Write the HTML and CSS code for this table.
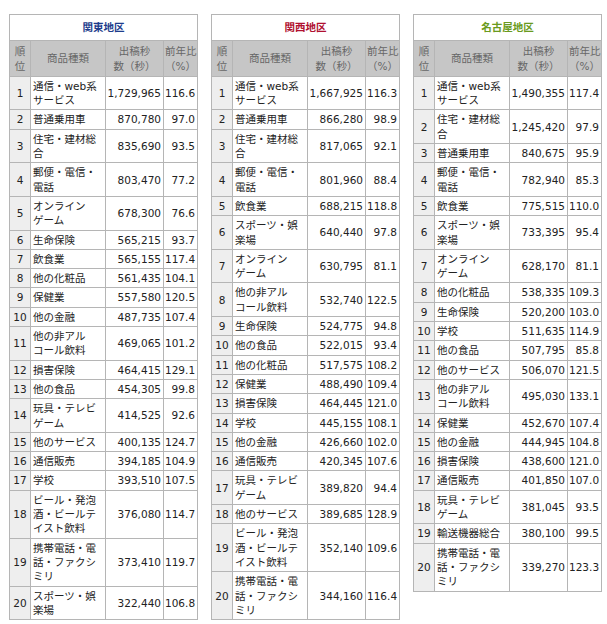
FILE: index.html
```html
<!DOCTYPE html>
<html lang="ja">
<head>
<meta charset="utf-8">
<link rel="stylesheet" href="styles.css">
</head>
<body>
<div class="wrap">
<table class="rank">
<colgroup><col class="c-no"><col class="c-name"><col class="c-num"><col class="c-pct"></colgroup>
<tr><th colspan="4" class="title kanto">関東地区</th></tr>
<tr class="head"><th>順<br>位</th><th>商品種類</th><th>出稿秒<br>数（秒）</th><th>前年比<br>（%）</th></tr>
<tr><td class="no">1</td><td>通信・web系<br>サービス</td><td class="num">1,729,965</td><td class="num">116.6</td></tr>
<tr><td class="no">2</td><td>普通乗用車</td><td class="num">870,780</td><td class="num">97.0</td></tr>
<tr><td class="no">3</td><td>住宅・建材総<br>合</td><td class="num">835,690</td><td class="num">93.5</td></tr>
<tr><td class="no">4</td><td>郵便・電信・<br>電話</td><td class="num">803,470</td><td class="num">77.2</td></tr>
<tr><td class="no">5</td><td>オンライン<br>ゲーム</td><td class="num">678,300</td><td class="num">76.6</td></tr>
<tr><td class="no">6</td><td>生命保険</td><td class="num">565,215</td><td class="num">93.7</td></tr>
<tr><td class="no">7</td><td>飲食業</td><td class="num">565,155</td><td class="num">117.4</td></tr>
<tr><td class="no">8</td><td>他の化粧品</td><td class="num">561,435</td><td class="num">104.1</td></tr>
<tr><td class="no">9</td><td>保健業</td><td class="num">557,580</td><td class="num">120.5</td></tr>
<tr><td class="no">10</td><td>他の金融</td><td class="num">487,735</td><td class="num">107.4</td></tr>
<tr><td class="no">11</td><td>他の非アル<br>コール飲料</td><td class="num">469,065</td><td class="num">101.2</td></tr>
<tr><td class="no">12</td><td>損害保険</td><td class="num">464,415</td><td class="num">129.1</td></tr>
<tr><td class="no">13</td><td>他の食品</td><td class="num">454,305</td><td class="num">99.8</td></tr>
<tr><td class="no">14</td><td>玩具・テレビ<br>ゲーム</td><td class="num">414,525</td><td class="num">92.6</td></tr>
<tr><td class="no">15</td><td>他のサービス</td><td class="num">400,135</td><td class="num">124.7</td></tr>
<tr><td class="no">16</td><td>通信販売</td><td class="num">394,185</td><td class="num">104.9</td></tr>
<tr><td class="no">17</td><td>学校</td><td class="num">393,510</td><td class="num">107.5</td></tr>
<tr><td class="no">18</td><td>ビール・発泡<br>酒・ビールテ<br>イスト飲料</td><td class="num">376,080</td><td class="num">114.7</td></tr>
<tr><td class="no">19</td><td>携帯電話・電<br>話・ファクシ<br>ミリ</td><td class="num">373,410</td><td class="num">119.7</td></tr>
<tr><td class="no">20</td><td>スポーツ・娯<br>楽場</td><td class="num">322,440</td><td class="num">106.8</td></tr>
</table>

<table class="rank">
<colgroup><col class="c-no"><col class="c-name"><col class="c-num"><col class="c-pct"></colgroup>
<tr><th colspan="4" class="title kansai">関西地区</th></tr>
<tr class="head"><th>順<br>位</th><th>商品種類</th><th>出稿秒<br>数（秒）</th><th>前年比<br>（%）</th></tr>
<tr><td class="no">1</td><td>通信・web系<br>サービス</td><td class="num">1,667,925</td><td class="num">116.3</td></tr>
<tr><td class="no">2</td><td>普通乗用車</td><td class="num">866,280</td><td class="num">98.9</td></tr>
<tr><td class="no">3</td><td>住宅・建材総<br>合</td><td class="num">817,065</td><td class="num">92.1</td></tr>
<tr><td class="no">4</td><td>郵便・電信・<br>電話</td><td class="num">801,960</td><td class="num">88.4</td></tr>
<tr><td class="no">5</td><td>飲食業</td><td class="num">688,215</td><td class="num">118.8</td></tr>
<tr><td class="no">6</td><td>スポーツ・娯<br>楽場</td><td class="num">640,440</td><td class="num">97.8</td></tr>
<tr><td class="no">7</td><td>オンライン<br>ゲーム</td><td class="num">630,795</td><td class="num">81.1</td></tr>
<tr><td class="no">8</td><td>他の非アル<br>コール飲料</td><td class="num">532,740</td><td class="num">122.5</td></tr>
<tr><td class="no">9</td><td>生命保険</td><td class="num">524,775</td><td class="num">94.8</td></tr>
<tr><td class="no">10</td><td>他の食品</td><td class="num">522,015</td><td class="num">93.4</td></tr>
<tr><td class="no">11</td><td>他の化粧品</td><td class="num">517,575</td><td class="num">108.2</td></tr>
<tr><td class="no">12</td><td>保健業</td><td class="num">488,490</td><td class="num">109.4</td></tr>
<tr><td class="no">13</td><td>損害保険</td><td class="num">464,445</td><td class="num">121.0</td></tr>
<tr><td class="no">14</td><td>学校</td><td class="num">445,155</td><td class="num">108.1</td></tr>
<tr><td class="no">15</td><td>他の金融</td><td class="num">426,660</td><td class="num">102.0</td></tr>
<tr><td class="no">16</td><td>通信販売</td><td class="num">420,345</td><td class="num">107.6</td></tr>
<tr><td class="no">17</td><td>玩具・テレビ<br>ゲーム</td><td class="num">389,820</td><td class="num">94.4</td></tr>
<tr><td class="no">18</td><td>他のサービス</td><td class="num">389,685</td><td class="num">128.9</td></tr>
<tr><td class="no">19</td><td>ビール・発泡<br>酒・ビールテ<br>イスト飲料</td><td class="num">352,140</td><td class="num">109.6</td></tr>
<tr><td class="no">20</td><td>携帯電話・電<br>話・ファクシ<br>ミリ</td><td class="num">344,160</td><td class="num">116.4</td></tr>
</table>

<table class="rank">
<colgroup><col class="c-no"><col class="c-name"><col class="c-num"><col class="c-pct"></colgroup>
<tr><th colspan="4" class="title nagoya">名古屋地区</th></tr>
<tr class="head"><th>順<br>位</th><th>商品種類</th><th>出稿秒<br>数（秒）</th><th>前年比<br>（%）</th></tr>
<tr><td class="no">1</td><td>通信・web系<br>サービス</td><td class="num">1,490,355</td><td class="num">117.4</td></tr>
<tr><td class="no">2</td><td>住宅・建材総<br>合</td><td class="num">1,245,420</td><td class="num">97.9</td></tr>
<tr><td class="no">3</td><td>普通乗用車</td><td class="num">840,675</td><td class="num">95.9</td></tr>
<tr><td class="no">4</td><td>郵便・電信・<br>電話</td><td class="num">782,940</td><td class="num">85.3</td></tr>
<tr><td class="no">5</td><td>飲食業</td><td class="num">775,515</td><td class="num">110.0</td></tr>
<tr><td class="no">6</td><td>スポーツ・娯<br>楽場</td><td class="num">733,395</td><td class="num">95.4</td></tr>
<tr><td class="no">7</td><td>オンライン<br>ゲーム</td><td class="num">628,170</td><td class="num">81.1</td></tr>
<tr><td class="no">8</td><td>他の化粧品</td><td class="num">538,335</td><td class="num">109.3</td></tr>
<tr><td class="no">9</td><td>生命保険</td><td class="num">520,200</td><td class="num">103.0</td></tr>
<tr><td class="no">10</td><td>学校</td><td class="num">511,635</td><td class="num">114.9</td></tr>
<tr><td class="no">11</td><td>他の食品</td><td class="num">507,795</td><td class="num">85.8</td></tr>
<tr><td class="no">12</td><td>他のサービス</td><td class="num">506,070</td><td class="num">121.5</td></tr>
<tr><td class="no">13</td><td>他の非アル<br>コール飲料</td><td class="num">495,030</td><td class="num">133.1</td></tr>
<tr><td class="no">14</td><td>保健業</td><td class="num">452,670</td><td class="num">107.4</td></tr>
<tr><td class="no">15</td><td>他の金融</td><td class="num">444,945</td><td class="num">104.8</td></tr>
<tr><td class="no">16</td><td>損害保険</td><td class="num">438,600</td><td class="num">121.0</td></tr>
<tr><td class="no">17</td><td>通信販売</td><td class="num">401,850</td><td class="num">107.0</td></tr>
<tr><td class="no">18</td><td>玩具・テレビ<br>ゲーム</td><td class="num">381,045</td><td class="num">93.5</td></tr>
<tr><td class="no">19</td><td>輸送機器総合</td><td class="num">380,100</td><td class="num">99.5</td></tr>
<tr><td class="no">20</td><td>携帯電話・電<br>話・ファクシ<br>ミリ</td><td class="num">339,270</td><td class="num">123.3</td></tr>
</table>
</div>
</body>
</html>
```
FILE: styles.css
```css
html, body {
  margin: 0;
  padding: 0;
  background: #ffffff;
}
body {
  font-family: "DejaVu Sans", "Noto Sans CJK JP", sans-serif;
  font-size: 10.5px;
  line-height: 14.3px;
  color: #222222;
}
.wrap {
  display: flex;
  align-items: flex-start;
  gap: 13px;
  padding: 14px 0 0 9px;
}
.rank {
  border-collapse: collapse;
  table-layout: fixed;
  width: 188px;
  flex: none;
}
.c-no { width: 21px; }
.c-name { width: 75px; }
.c-num { width: 58px; }
.c-pct { width: 34px; }
.rank th,
.rank td {
  border: 1px solid #b5b5b5;
  padding: 2px 2px;
  vertical-align: middle;
  white-space: nowrap;
  overflow: hidden;
}
.rank .title {
  background: #ffffff;
  font-weight: bold;
  text-align: center;
  padding: 5px 2px 6px;
}
.kanto { color: #1d3d8c; }
.kansai { color: #b01030; }
.nagoya { color: #6a9a20; }
.head th {
  background: #c6c6c6;
  color: #666666;
  font-weight: normal;
  text-align: center;
  padding: 3px 1px;
}
.rank td.no {
  background: #eeeeee;
  text-align: center;
  padding: 2px 0;
}
.rank td.num {
  text-align: right;
  padding: 2px 2px 2px 1px;
}
```
